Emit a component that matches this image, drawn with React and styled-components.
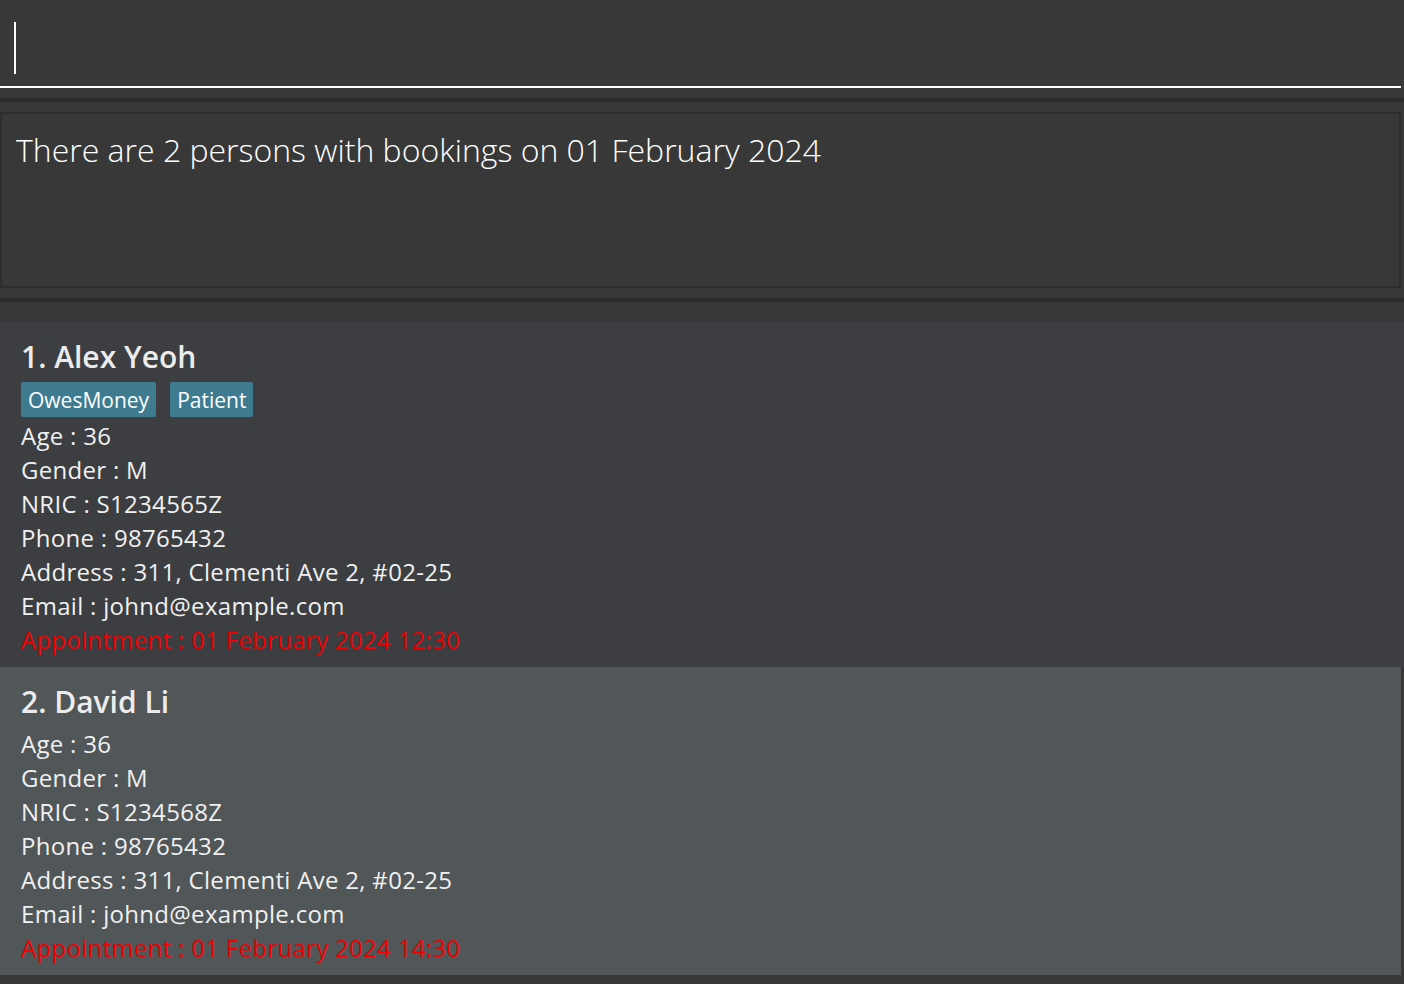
import React from "react";
import styled, { createGlobalStyle } from "styled-components";

const GlobalStyle = createGlobalStyle`
  html, body {
    margin: 0;
    padding: 0;
    background: #383838;
  }
  #root {
    min-height: 984px;
    background: #383838;
  }
`;

const persons = [
  {
    name: "Alex Yeoh",
    tags: ["OwesMoney", "Patient"],
    age: 36,
    gender: "M",
    nric: "S1234565Z",
    phone: "98765432",
    address: "311, Clementi Ave 2, #02-25",
    email: "johnd@example.com",
    appointment: "01 February 2024 12:30",
  },
  {
    name: "David Li",
    tags: [],
    age: 36,
    gender: "M",
    nric: "S1234568Z",
    phone: "98765432",
    address: "311, Clementi Ave 2, #02-25",
    email: "johnd@example.com",
    appointment: "01 February 2024 14:30",
  },
];

const App = () => {
  return (
    <>
      <GlobalStyle />
      <Window>
        <CommandBox>
          <Caret />
        </CommandBox>
        <Separator />
        <ResultBox>
          <ResultText>There are 2 persons with bookings on 01 February 2024</ResultText>
        </ResultBox>
        <Separator />
        <PersonList>
          {persons.map((p, i) => (
            <Card key={p.name} $odd={i % 2 === 1}>
              <Name>
                {i + 1}. {p.name}
              </Name>
              {p.tags.length > 0 && (
                <Tags>
                  {p.tags.map((t) => (
                    <Tag key={t}>{t}</Tag>
                  ))}
                </Tags>
              )}
              <Field>Age : {p.age}</Field>
              <Field>Gender : {p.gender}</Field>
              <Field>NRIC : {p.nric}</Field>
              <Field>Phone : {p.phone}</Field>
              <Field>Address : {p.address}</Field>
              <Field>Email : {p.email}</Field>
              <Field $alert>Appointment : {p.appointment}</Field>
            </Card>
          ))}
        </PersonList>
      </Window>
    </>
  );
};

const Window = styled.div`
  display: flex;
  flex-direction: column;
  width: 1404px;
  font-family: "Open Sans", "Noto Sans", sans-serif;
  color: #f0f0f0;
`;

const CommandBox = styled.div`
  display: flex;
  align-items: flex-start;
  box-sizing: border-box;
  height: 88px;
  width: 1401px;
  border-bottom: 2px solid #ffffff;
  padding: 22px 0 0 14px;
`;

const Caret = styled.div`
  width: 2px;
  height: 52px;
  background: #ffffff;
`;

const Separator = styled.div`
  height: 4px;
  margin: 10px 0;
  background: #2b2b2b;
`;

const ResultBox = styled.div`
  box-sizing: border-box;
  width: 1401px;
  height: 176px;
  border: 2px solid #2d2d2d;
  padding: 14px 14px;
`;

const ResultText = styled.div`
  font-weight: 300;
  font-size: 32px;
  line-height: 44px;
  color: #ffffff;
`;

const PersonList = styled.div`
  display: flex;
  flex-direction: column;
  margin-top: 10px;
`;

const Card = styled.div`
  display: flex;
  flex-direction: column;
  align-items: flex-start;
  padding: 14px 21px 10px;
  background: ${(p) => (p.$odd ? "#515658" : "#3c3e41")};
  margin-right: ${(p) => (p.$odd ? "3px" : "0")};
`;

const Name = styled.div`
  font-size: 30px;
  font-weight: 600;
  line-height: 42px;
  color: #ececec;
  margin-bottom: 4px;
`;

const Tags = styled.div`
  display: flex;
  gap: 14px;
  margin-bottom: 2px;
`;

const Tag = styled.span`
  display: inline-flex;
  align-items: center;
  height: 35px;
  padding: 0 7px;
  border-radius: 2px;
  background: #3e7b91;
  color: #ffffff;
  font-size: 21px;
`;

const Field = styled.div`
  font-size: 24px;
  line-height: 34px;
  letter-spacing: 0.3px;
  color: ${(p) => (p.$alert ? "#ee0000" : "#f0f0f0")};
`;

export default App;
